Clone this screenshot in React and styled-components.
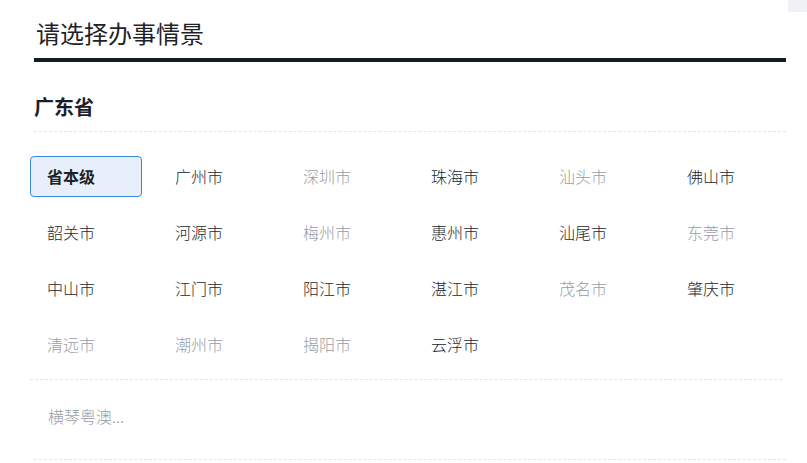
import React from 'react';
import styled, { createGlobalStyle } from 'styled-components';

const GlobalStyle = createGlobalStyle`
  * { box-sizing: border-box; }
  body {
    margin: 0;
    background: #fff;
    font-family: "Noto Sans CJK SC", "Noto Sans", sans-serif;
    color: #1f2329;
  }
`;

const Page = styled.div`
  position: relative;
  padding: 0 21px 0 34px;
`;

const CornerTab = styled.div`
  position: absolute;
  top: 0;
  right: 0;
  width: 19px;
  height: 12px;
  background: #f0f1f4;
`;

const Header = styled.h1`
  margin: 0;
  padding: 17px 0 9px 2px;
  font-size: 24px;
  line-height: 32px;
  font-weight: 400;
  color: #1f2329;
  border-bottom: 4px solid #121b27;
`;

const Province = styled.h2`
  margin: 0;
  padding: 31px 0 10px;
  font-size: 20px;
  line-height: 28px;
  font-weight: 700;
  color: #1a1f26;
  border-bottom: 1px dashed #e3e4e7;
`;

const Section = styled.div`
  margin-left: ${p => (p.$shift ? '-4px' : '0')};
  margin-right: ${p => (p.$shift ? '4px' : '0')};
  padding: ${p => p.$pad};
  border-bottom: 1px dashed #e3e4e7;
`;

const CityGrid = styled.div`
  display: grid;
  grid-template-columns: repeat(6, 112px);
  column-gap: 16px;
  row-gap: 15px;
`;

const City = styled.div`
  height: 41px;
  padding: 0 16px 1px ${p => (p.$inset ? '13px' : '16px')};
  display: flex;
  align-items: center;
  font-size: 16px;
  white-space: nowrap;
  border-radius: 4px;
  border: 1px solid ${p => (p.$active ? '#3b87e0' : 'transparent')};
  background: ${p => (p.$active ? '#e7f0fa' : 'transparent')};
  font-weight: ${p => (p.$active ? 700 : 300)};
  color: ${p => (p.$off ? '#999da4' : p.$active ? '#1f2329' : '#23272e')};
  cursor: ${p => (p.$off ? 'default' : 'pointer')};
`;

const cities = [
  { name: '省本级', active: true },
  { name: '广州市' },
  { name: '深圳市', off: true },
  { name: '珠海市' },
  { name: '汕头市', off: true },
  { name: '佛山市' },
  { name: '韶关市' },
  { name: '河源市' },
  { name: '梅州市', off: true },
  { name: '惠州市' },
  { name: '汕尾市' },
  { name: '东莞市', off: true },
  { name: '中山市' },
  { name: '江门市' },
  { name: '阳江市' },
  { name: '湛江市' },
  { name: '茂名市', off: true },
  { name: '肇庆市' },
  { name: '清远市', off: true },
  { name: '潮州市', off: true },
  { name: '揭阳市', off: true },
  { name: '云浮市' },
];

const App = () => {
  return (
    <>
      <GlobalStyle />
      <Page>
        <CornerTab />
        <Header>请选择办事情景</Header>
        <Province>广东省</Province>
        <Section $shift $pad="24px 0 14px">
          <CityGrid>
            {cities.map(city => (
              <City key={city.name} $active={city.active} $off={city.off}>
                {city.name}
              </City>
            ))}
          </CityGrid>
        </Section>
        <Section $pad="16px 0 22px">
          <City $off $inset>横琴粤澳...</City>
        </Section>
      </Page>
    </>
  );
};

export default App;
